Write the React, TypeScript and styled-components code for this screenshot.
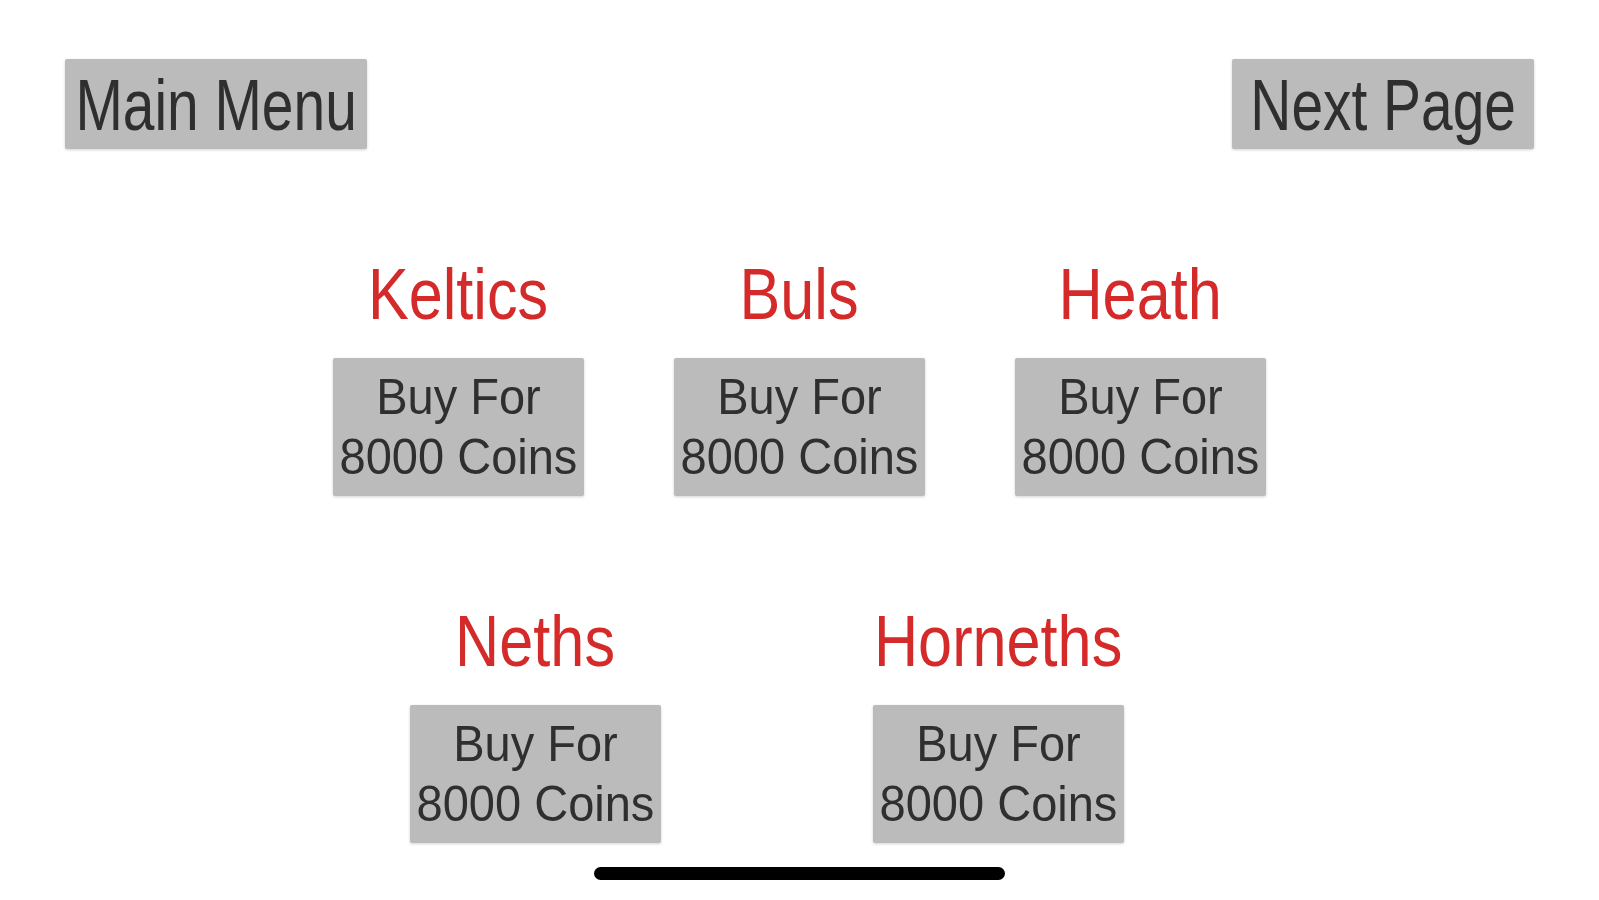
import styled, { createGlobalStyle } from 'styled-components';

const GlobalStyle = createGlobalStyle`
	html, body {
		margin: 0;
		padding: 0;
		background: #ffffff;
	}
	body {
		font-family: 'Liberation Sans', Arial, Helvetica, sans-serif;
	}
`;

const teams = [
	[{ name: 'Keltics' }, { name: 'Buls' }, { name: 'Heath' }],
	[{ name: 'Neths' }, { name: 'Horneths' }],
];

export default function App() {
	return (
		<>
			<GlobalStyle />
			<StyledPage>
				<StyledTopBar>
					<StyledNavButton>
						<StyledNavLabel>Main Menu</StyledNavLabel>
					</StyledNavButton>
					<StyledNavButton>
						<StyledNavLabel>Next Page</StyledNavLabel>
					</StyledNavButton>
				</StyledTopBar>
				<StyledShop>
					{teams.map((row, rowIndex) => (
						<StyledRow key={rowIndex} $wide={rowIndex === 1}>
							{row.map((team) => (
								<TeamCard key={team.name} name={team.name} price={8000} />
							))}
						</StyledRow>
					))}
				</StyledShop>
				<StyledHomeIndicator />
			</StyledPage>
		</>
	);
}

const TeamCard = ({ name, price }: { name: string; price: number }) => {
	return (
		<StyledCard>
			<StyledTeamName>{name}</StyledTeamName>
			<StyledBuyButton>
				<StyledBuyLabel>
					Buy For
					<br />
					{price} Coins
				</StyledBuyLabel>
			</StyledBuyButton>
		</StyledCard>
	);
};

const StyledPage = styled.div`
	width: 100%;
	min-height: 100vh;
	display: flex;
	flex-direction: column;
	align-items: center;
	box-sizing: border-box;
	padding-top: 59px;
`;

const StyledTopBar = styled.div`
	width: 100%;
	box-sizing: border-box;
	padding: 0 65px;
	display: flex;
	justify-content: space-between;
`;

const StyledNavButton = styled.button`
	width: 302px;
	height: 90px;
	border: none;
	border-radius: 2px;
	padding: 0;
	background: #bbbbbb;
	box-shadow: 0 1px 3px rgba(0, 0, 0, 0.18);
	color: #2f2f2f;
	font-family: inherit;
	font-size: 72px;
	line-height: 1;
	display: flex;
	align-items: center;
	justify-content: center;
	cursor: pointer;
`;

const StyledNavLabel = styled.span`
	display: block;
	white-space: nowrap;
	transform: scaleX(0.79);
	margin-top: 2px;
`;

const StyledShop = styled.div`
	display: flex;
	flex-direction: column;
	gap: 109px;
	margin-top: 109px;
	width: 100%;
`;

const StyledRow = styled.div<{ $wide: boolean }>`
	display: flex;
	justify-content: center;
	gap: ${({ $wide }) => ($wide ? '212px' : '90px')};
	padding-right: ${({ $wide }) => ($wide ? '66px' : '0')};
`;

const StyledCard = styled.div`
	width: 251px;
	display: flex;
	flex-direction: column;
	align-items: center;
	gap: 28px;
`;

const StyledTeamName = styled.div`
	color: #d42a2a;
	font-size: 72px;
	line-height: 72px;
	white-space: nowrap;
	transform: scaleX(0.85);
`;

const StyledBuyButton = styled.button`
	width: 251px;
	height: 138px;
	border: none;
	border-radius: 2px;
	padding: 0;
	background: #bbbbbb;
	box-shadow: 0 1px 3px rgba(0, 0, 0, 0.18);
	color: #2f2f2f;
	font-family: inherit;
	font-size: 50px;
	line-height: 60px;
	display: flex;
	align-items: center;
	justify-content: center;
	cursor: pointer;
`;

const StyledBuyLabel = styled.span`
	display: block;
	text-align: center;
	white-space: nowrap;
	transform: scaleX(0.94);
`;

const StyledHomeIndicator = styled.div`
	width: 411px;
	height: 13px;
	border-radius: 7px;
	background: #000000;
	margin-top: 24px;
`;
